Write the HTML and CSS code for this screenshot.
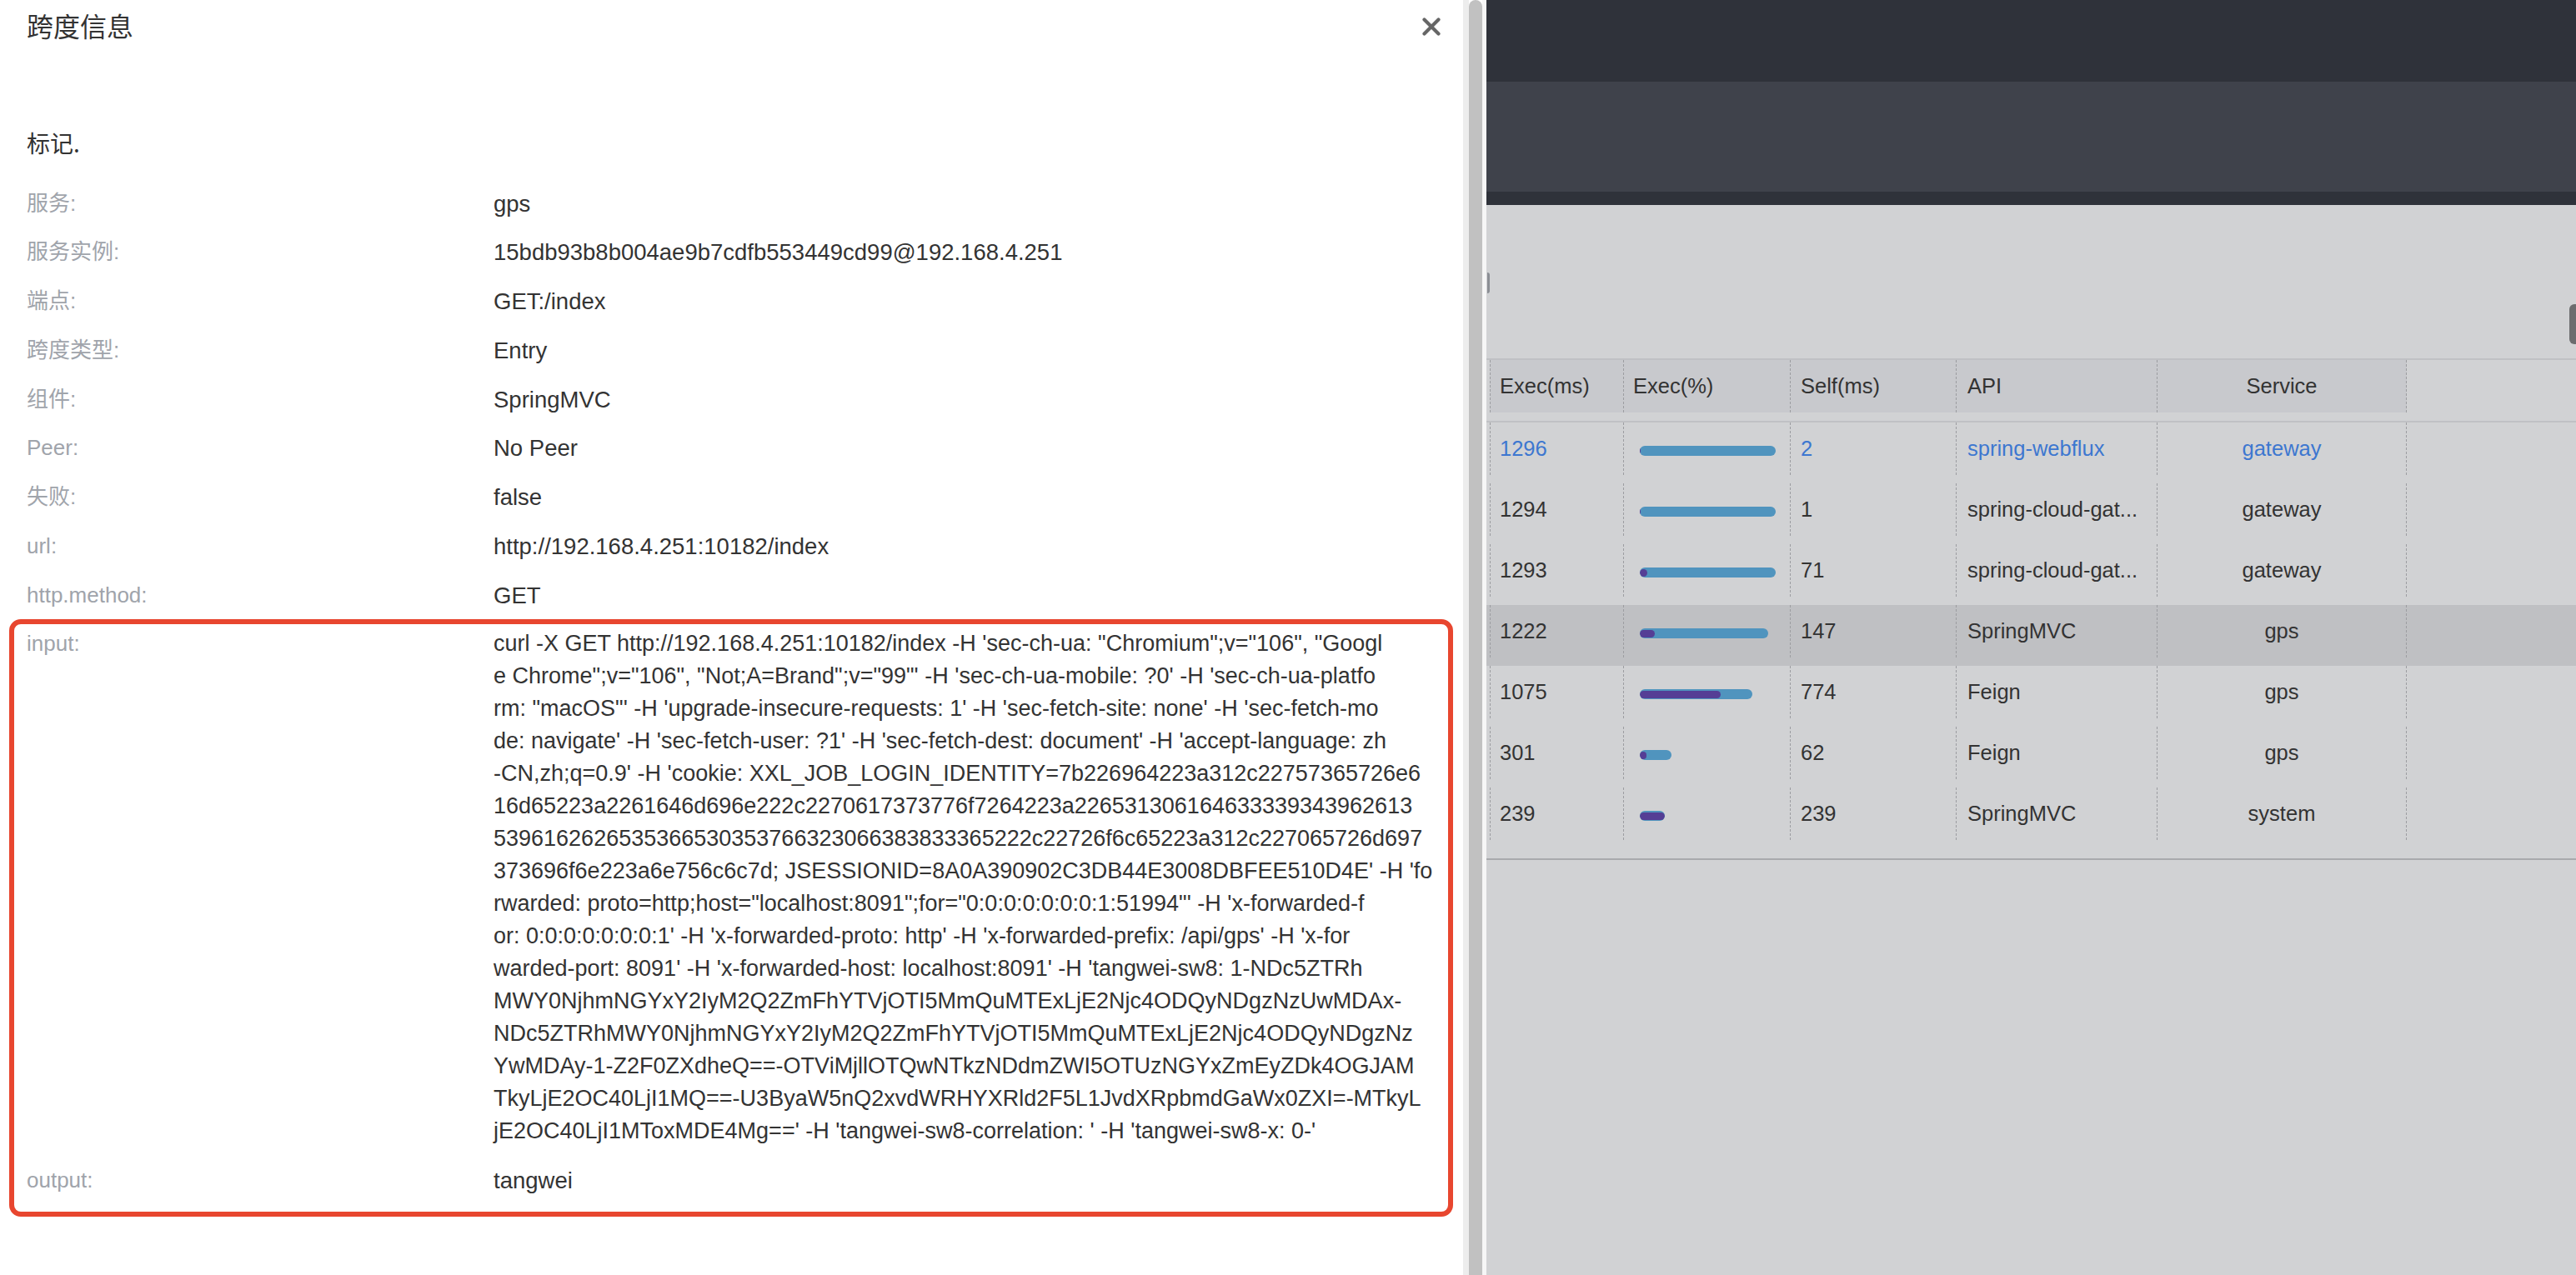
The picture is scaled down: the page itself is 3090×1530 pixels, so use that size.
FILE: index.html
```html
<!DOCTYPE html>
<html lang="zh-CN">
<head>
<meta charset="utf-8">
<title>跨度信息</title>
<link rel="stylesheet" href="styles.css">
</head>
<body>
<aside class="drawer">
  <header class="drawer-head">
    <h1 class="drawer-title">跨度信息</h1>
    <svg class="close" viewBox="0 0 22 22" aria-label="close"><path d="M2.5 2.5 L19.5 19.5 M19.5 2.5 L2.5 19.5" stroke="#666" stroke-width="4.2" stroke-linecap="round" fill="none"/></svg>
  </header>
  <h2 class="section-label">标记.</h2>
  <div class="fields">
    <div class="field"><div class="field-key">服务:</div><div class="field-val">gps</div></div>
    <div class="field"><div class="field-key">服务实例:</div><div class="field-val">15bdb93b8b004ae9b7cdfb553449cd99@192.168.4.251</div></div>
    <div class="field"><div class="field-key">端点:</div><div class="field-val">GET:/index</div></div>
    <div class="field"><div class="field-key">跨度类型:</div><div class="field-val">Entry</div></div>
    <div class="field"><div class="field-key">组件:</div><div class="field-val">SpringMVC</div></div>
    <div class="field"><div class="field-key">Peer:</div><div class="field-val">No Peer</div></div>
    <div class="field"><div class="field-key">失败:</div><div class="field-val">false</div></div>
    <div class="field"><div class="field-key">url:</div><div class="field-val">http://192.168.4.251:10182/index</div></div>
    <div class="field"><div class="field-key">http.method:</div><div class="field-val">GET</div></div>
    <div class="annot">
      <div class="field"><div class="field-key">input:</div><div class="field-val code">curl -X GET http://192.168.4.251:10182/index -H 'sec-ch-ua: "Chromium";v="106", "Googl<br>e Chrome";v="106", "Not;A=Brand";v="99"' -H 'sec-ch-ua-mobile: ?0' -H 'sec-ch-ua-platfo<br>rm: "macOS"' -H 'upgrade-insecure-requests: 1' -H 'sec-fetch-site: none' -H 'sec-fetch-mo<br>de: navigate' -H 'sec-fetch-user: ?1' -H 'sec-fetch-dest: document' -H 'accept-language: zh<br>-CN,zh;q=0.9' -H 'cookie: XXL_JOB_LOGIN_IDENTITY=7b226964223a312c22757365726e6<br>16d65223a2261646d696e222c2270617373776f7264223a226531306164633339343962613<br>5396162626535366530353766323066383833365222c22726f6c65223a312c227065726d697<br>373696f6e223a6e756c6c7d; JSESSIONID=8A0A390902C3DB44E3008DBFEE510D4E' -H 'fo<br>rwarded: proto=http;host="localhost:8091";for="0:0:0:0:0:0:0:1:51994"' -H 'x-forwarded-f<br>or: 0:0:0:0:0:0:0:1' -H 'x-forwarded-proto: http' -H 'x-forwarded-prefix: /api/gps' -H 'x-for<br>warded-port: 8091' -H 'x-forwarded-host: localhost:8091' -H 'tangwei-sw8: 1-NDc5ZTRh<br>MWY0NjhmNGYxY2IyM2Q2ZmFhYTVjOTI5MmQuMTExLjE2Njc4ODQyNDgzNzUwMDAx-<br>NDc5ZTRhMWY0NjhmNGYxY2IyM2Q2ZmFhYTVjOTI5MmQuMTExLjE2Njc4ODQyNDgzNz<br>YwMDAy-1-Z2F0ZXdheQ==-OTViMjllOTQwNTkzNDdmZWI5OTUzNGYxZmEyZDk4OGJAM<br>TkyLjE2OC40LjI1MQ==-U3ByaW5nQ2xvdWRHYXRld2F5L1JvdXRpbmdGaWx0ZXI=-MTkyL<br>jE2OC40LjI1MToxMDE4Mg==' -H 'tangwei-sw8-correlation: ' -H 'tangwei-sw8-x: 0-'</div></div>
      <div class="field"><div class="field-key">output:</div><div class="field-val">tangwei</div></div>
    </div>
  </div>
</aside>
<div class="scrollbar"><div class="track-a"></div><div class="thumb"></div><div class="track-b"></div></div>
<main class="backdrop">
  <div class="topbar"></div>
  <div class="subbar"></div>
  <span class="tab-left"></span>
  <span class="edge-thumb"></span>
  <section class="trace-table">
    <div class="thead">
      <div class="th c1">Exec(ms)</div>
      <div class="th c2">Exec(%)</div>
      <div class="th c3">Self(ms)</div>
      <div class="th c4">API</div>
      <div class="th c5">Service</div>
    </div>
    <div class="tbody">
      <div class="tr link">
        <div class="td c1">1296</div>
        <div class="td c2"><div class="bar" style="width:163px"><div class="bar-self" style="width:0.15%"></div></div></div>
        <div class="td c3">2</div>
        <div class="td c4">spring-webflux</div>
        <div class="td c5">gateway</div>
      </div>
      <div class="tr">
        <div class="td c1">1294</div>
        <div class="td c2"><div class="bar" style="width:162.7px"><div class="bar-self" style="width:0.08%"></div></div></div>
        <div class="td c3">1</div>
        <div class="td c4">spring-cloud-gat...</div>
        <div class="td c5">gateway</div>
      </div>
      <div class="tr">
        <div class="td c1">1293</div>
        <div class="td c2"><div class="bar" style="width:162.6px"><div class="bar-self" style="width:5.5%"></div></div></div>
        <div class="td c3">71</div>
        <div class="td c4">spring-cloud-gat...</div>
        <div class="td c5">gateway</div>
      </div>
      <div class="tr active">
        <div class="td c1">1222</div>
        <div class="td c2"><div class="bar" style="width:153.7px"><div class="bar-self" style="width:12%"></div></div></div>
        <div class="td c3">147</div>
        <div class="td c4">SpringMVC</div>
        <div class="td c5">gps</div>
      </div>
      <div class="tr">
        <div class="td c1">1075</div>
        <div class="td c2"><div class="bar" style="width:135.2px"><div class="bar-self" style="width:72%"></div></div></div>
        <div class="td c3">774</div>
        <div class="td c4">Feign</div>
        <div class="td c5">gps</div>
      </div>
      <div class="tr">
        <div class="td c1">301</div>
        <div class="td c2"><div class="bar" style="width:37.9px"><div class="bar-self" style="width:20.6%"></div></div></div>
        <div class="td c3">62</div>
        <div class="td c4">Feign</div>
        <div class="td c5">gps</div>
      </div>
      <div class="tr">
        <div class="td c1">239</div>
        <div class="td c2"><div class="bar" style="width:30.1px"><div class="bar-self" style="width:100%"></div></div></div>
        <div class="td c3">239</div>
        <div class="td c4">SpringMVC</div>
        <div class="td c5">system</div>
      </div>
    </div>
  </section>
</main>
</body>
</html>
```
FILE: styles.css
```css
* { box-sizing: border-box; }
html, body { margin: 0; padding: 0; }
body {
  width: 3090px;
  height: 1530px;
  overflow: hidden;
  display: flex;
  font-family: "Liberation Sans", "Noto Sans CJK SC", sans-serif;
  color: #333;
  background: #d1d2d4;
}

/* ---------- drawer ---------- */
.drawer {
  width: 1755px;
  flex: none;
  background: #fff;
  padding: 0 27px 0 32px;
}
.drawer-head {
  height: 60px;
  display: flex;
  align-items: center;
  justify-content: space-between;
}
.drawer-title {
  margin: 0;
  font-family: "Noto Sans CJK SC", sans-serif;
  font-size: 32px;
  line-height: 1;
  font-weight: 400;
  color: #333;
}
.close {
  width: 22px;
  height: 22px;
  display: block;
  margin-top: 4px;
}
.section-label {
  margin: 91.5px 0 0;
  font-family: "Noto Sans CJK SC", sans-serif;
  font-size: 28px;
  line-height: 39px;
  font-weight: 400;
  color: #333;
}
.fields {
  margin-top: 34px;
}
.field {
  display: grid;
  grid-template-columns: 560px 1fr;
  line-height: 39px;
  margin-bottom: 19.75px;
}
.field-key {
  font-size: 26px;
  color: #a0a4ab;
}
.field-val {
  font-size: 27.5px;
  color: #333;
}
.field-val.code {
  font-size: 27px;
  white-space: nowrap;
}
.annot {
  position: relative;
}
.annot::after {
  content: "";
  position: absolute;
  top: -10.5px;
  bottom: -23.5px;
  left: -21px;
  right: -15px;
  border: 6px solid #e8462f;
  border-radius: 14px;
  pointer-events: none;
}

/* ---------- scrollbar ---------- */
.scrollbar {
  width: 28px;
  flex: none;
  display: flex;
  background: #fff;
}
.track-a { width: 7px; background: #ededed; }
.thumb { width: 16px; background: #c1c1c1; border-radius: 8px 8px 0 0; }
.track-b { width: 5px; background: #f6f6f6; }

/* ---------- backdrop page ---------- */
.backdrop {
  flex: 1;
  position: relative;
  background: #d1d2d4;
  display: flex;
  flex-direction: column;
}
.topbar {
  height: 98px;
  background: #2f323a;
}
.subbar {
  height: 148px;
  background: #3f424b;
  border-bottom: 16px solid #2f323a;
}
.tab-left {
  position: absolute;
  left: 1px;
  top: 327px;
  width: 3px;
  height: 25px;
  background: #8b8e94;
  border-radius: 0 3px 3px 0;
}
.edge-thumb {
  position: absolute;
  right: 0;
  top: 365px;
  width: 8px;
  height: 48px;
  background: #6b6c6e;
  border-radius: 6px 0 0 6px;
}

.trace-table {
  margin-top: 184px;
  border-top: 2px solid #c0c1c4;
  font-size: 25.5px;
  color: #333;
}
.thead {
  display: flex;
  height: 63px;
  padding-left: 4px;
}
.th {
  height: 63px;
  background: #c8c9cd;
  border-left: 1px dashed #9c9da1;
  display: flex;
  align-items: center;
  padding-left: 11px;
  white-space: nowrap;
}
.tbody {
  margin-top: 10px;
  border-top: 2px solid #c0c1c4;
  border-bottom: 2px solid #a9aaad;
  padding-bottom: 12px;
}
.tr {
  display: flex;
  align-items: flex-start;
  height: 73px;
  padding-left: 4px;
}
.tr.active { background: #bfc0c3; }
.tr.link { color: #3d77d0; }
.td {
  height: 63px;
  border-left: 1px dashed #9c9da1;
  display: flex;
  align-items: center;
  padding-left: 11px;
  white-space: nowrap;
}
.c1 { width: 160px; }
.c2 { width: 200px; }
.c3 { width: 199px; padding-left: 12px; }
.c4 { width: 241px; padding-left: 13px; }
.c5 {
  width: 300px;
  border-right: 1px dashed #9c9da1;
  justify-content: center;
  padding-left: 0;
}
.td.c2 { padding-left: 19px; }
.bar {
  height: 12px;
  margin-top: 5px;
  border-radius: 6px;
  background: #5094be;
  overflow: hidden;
}
.bar-self {
  height: 9px;
  margin-top: 1.5px;
  border-radius: 6px;
  background: #553e95;
}
```
